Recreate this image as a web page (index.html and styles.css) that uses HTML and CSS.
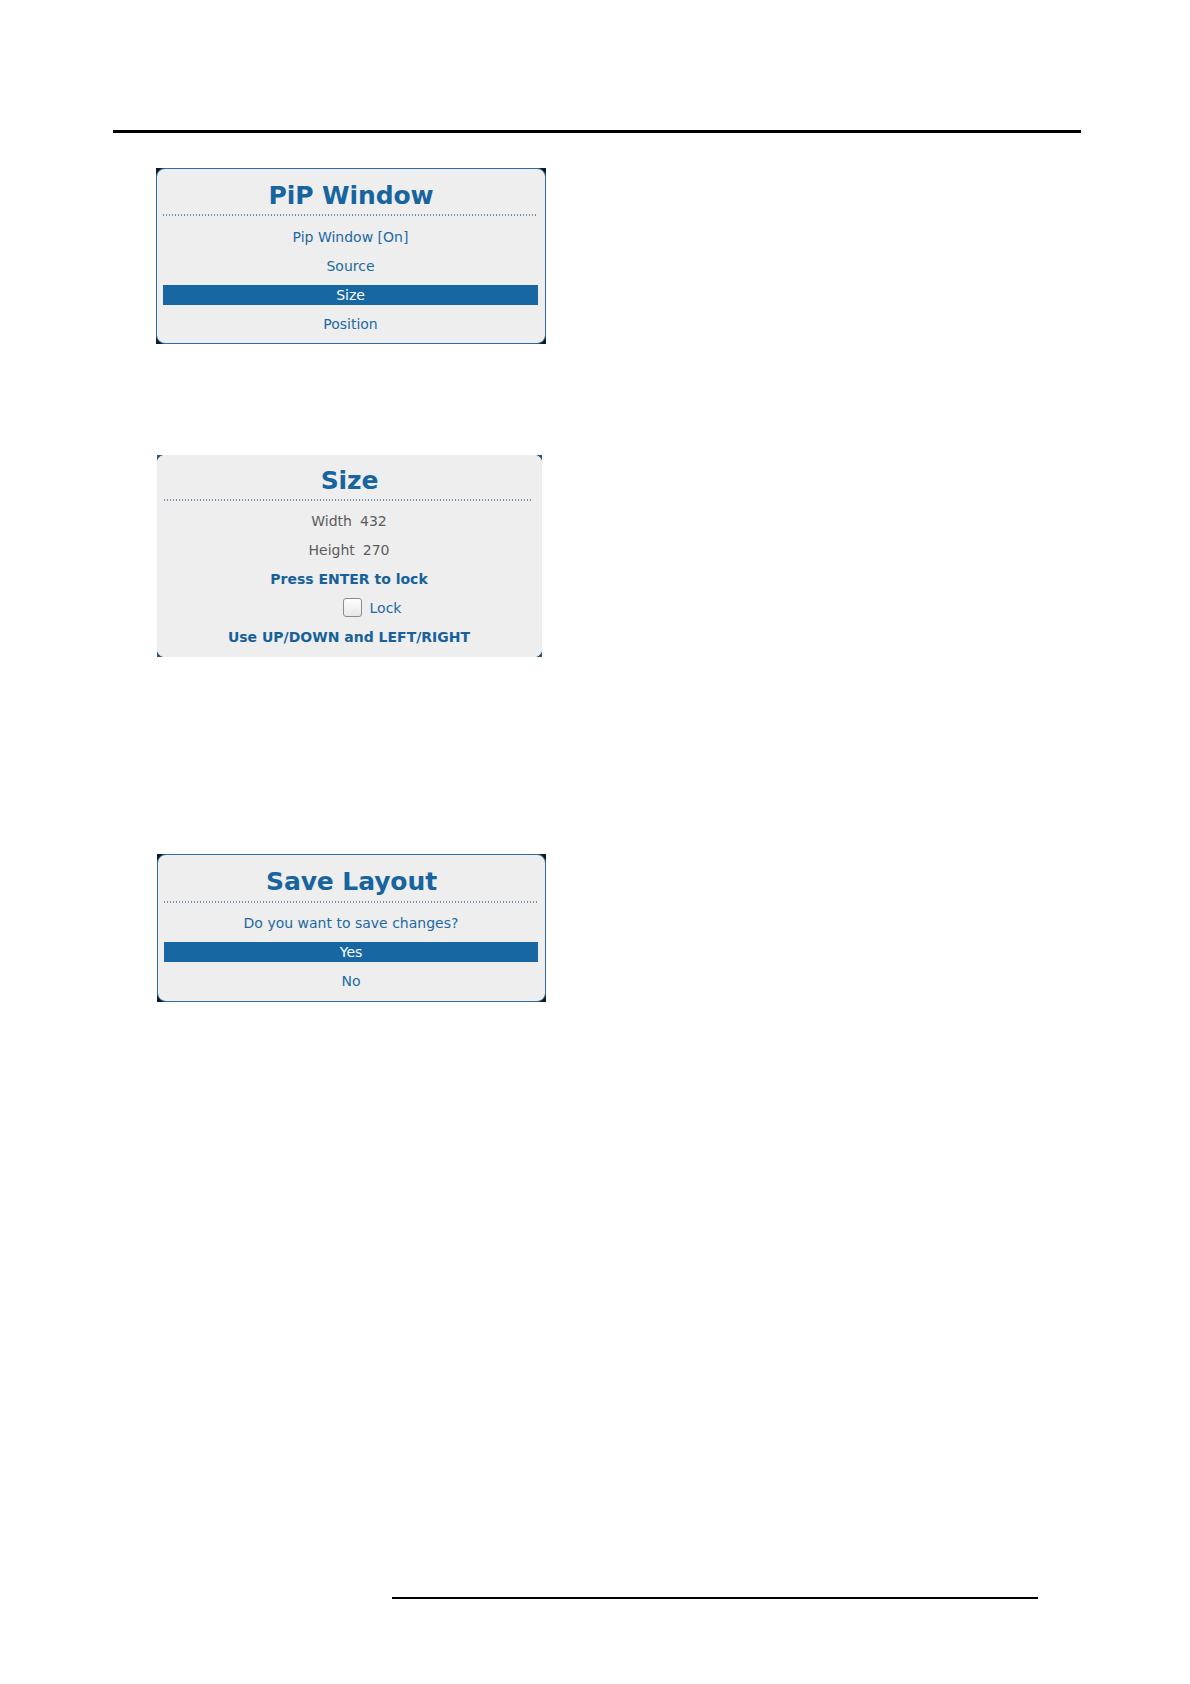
FILE: index.html
```html
<!DOCTYPE html>
<html lang="en">
<head>
<meta charset="utf-8">
<title>PiP Window</title>
<link rel="stylesheet" href="styles.css">
</head>
<body>
<div class="page">
  <div class="rule rule-top"></div>

  <div class="dlg dlg-pip">
    <div class="dlg-inner framed">
      <div class="dlg-title">PiP Window</div>
      <div class="dots"></div>
      <ul class="items">
        <li class="item"><span class="item-text">Pip Window [On]</span></li>
        <li class="item"><span class="item-text">Source</span></li>
        <li class="item"><span class="item-text selected">Size</span></li>
        <li class="item"><span class="item-text">Position</span></li>
      </ul>
    </div>
  </div>

  <div class="dlg dlg-size">
    <div class="dlg-inner plain">
      <div class="dlg-title">Size</div>
      <div class="dots"></div>
      <ul class="items items-size">
        <li class="item"><span class="item-text muted"><span class="lbl">Width</span><span class="val">432</span></span></li>
        <li class="item"><span class="item-text muted"><span class="lbl">Height</span><span class="val">270</span></span></li>
        <li class="item"><span class="item-text strong">Press ENTER to lock</span></li>
        <li class="item item-check"><span class="checkbox"></span><span class="check-label">Lock</span></li>
        <li class="item"><span class="item-text strong">Use UP/DOWN and LEFT/RIGHT</span></li>
      </ul>
    </div>
  </div>

  <div class="dlg dlg-save">
    <div class="dlg-inner framed">
      <div class="dlg-title">Save Layout</div>
      <div class="dots"></div>
      <ul class="items items-save">
        <li class="item"><span class="item-text">Do you want to save changes?</span></li>
        <li class="item"><span class="item-text selected">Yes</span></li>
        <li class="item"><span class="item-text">No</span></li>
      </ul>
    </div>
  </div>

  <div class="rule rule-bottom"></div>
</div>
</body>
</html>
```

FILE: styles.css
```css
html, body {
  margin: 0;
  padding: 0;
  background: #ffffff;
}

body {
  font-family: "DejaVu Sans", Verdana, sans-serif;
}

.page {
  width: 1190px;
  height: 1684px;
  overflow: hidden;
  padding-top: 130px;
  box-sizing: border-box;
}

.rule {
  background: #000000;
}

.rule-top {
  margin-left: 113px;
  width: 968px;
  height: 2.5px;
}

.rule-bottom {
  margin-left: 392px;
  width: 646px;
  height: 2px;
  margin-top: 595px;
}

/* dialogs */
.dlg {
  background: #0d1b26;
}

.dlg-pip {
  margin-left: 156px;
  margin-top: 35.5px;
  width: 390px;
}

.dlg-size {
  margin-left: 157px;
  margin-top: 111px;
  width: 385px;
  background: #2a5578;
}

.dlg-save {
  margin-left: 157px;
  margin-top: 197px;
  width: 389px;
}

.dlg-inner {
  background: #eeeeee;
  border-radius: 9px;
  border: 1px solid #2a6ea3;
}

.dlg-inner.plain {
  border-color: #eeeeee;
  border-radius: 7px;
}

.dlg-title {
  text-align: center;
  font-weight: bold;
  font-size: 25px;
  line-height: 37px;
  color: #17649f;
  padding-top: 8px;
  letter-spacing: -0.1px;
}

.dlg-size .dlg-title {
  padding-top: 7px;
  line-height: 36px;
}

.dlg-save .dlg-title {
  padding-top: 8px;
  line-height: 38px;
}

.dots {
  height: 2px;
  margin: 0 8px 0 6px;
  background-image: linear-gradient(to right, #7390ab 50%, transparent 50%);
  background-size: 3px 2px;
  background-repeat: repeat-x;
}

.items {
  list-style: none;
  margin: 0;
  padding: 6px 7px 5px 6px;
}

.items-size {
  padding-top: 5px;
  padding-bottom: 5px;
}

.items-save {
  padding-top: 5.5px;
  padding-bottom: 5.5px;
}

.item {
  height: 29px;
  display: flex;
  align-items: center;
  justify-content: center;
}

.item-text {
  display: block;
  width: 100%;
  height: 20px;
  line-height: 20px;
  text-align: center;
  font-size: 14px;
  color: #1c69a4;
}

.item-text.selected {
  background: #1767a2;
  color: #ffffff;
}

.item-text.muted {
  color: #5c5c5c;
}

.item-text.strong {
  font-weight: bold;
  color: #17619b;
}

.lbl {
  margin-right: 8px;
}

.item-check {
  padding-left: 46px;
}

.checkbox {
  width: 17px;
  height: 17px;
  border: 1px solid #8c8c8c;
  border-radius: 3px;
  background: linear-gradient(#ffffff, #e6e6e6);
  margin-right: 8px;
  flex: none;
}

.check-label {
  font-size: 14px;
  color: #1c69a4;
  line-height: 20px;
}
```
